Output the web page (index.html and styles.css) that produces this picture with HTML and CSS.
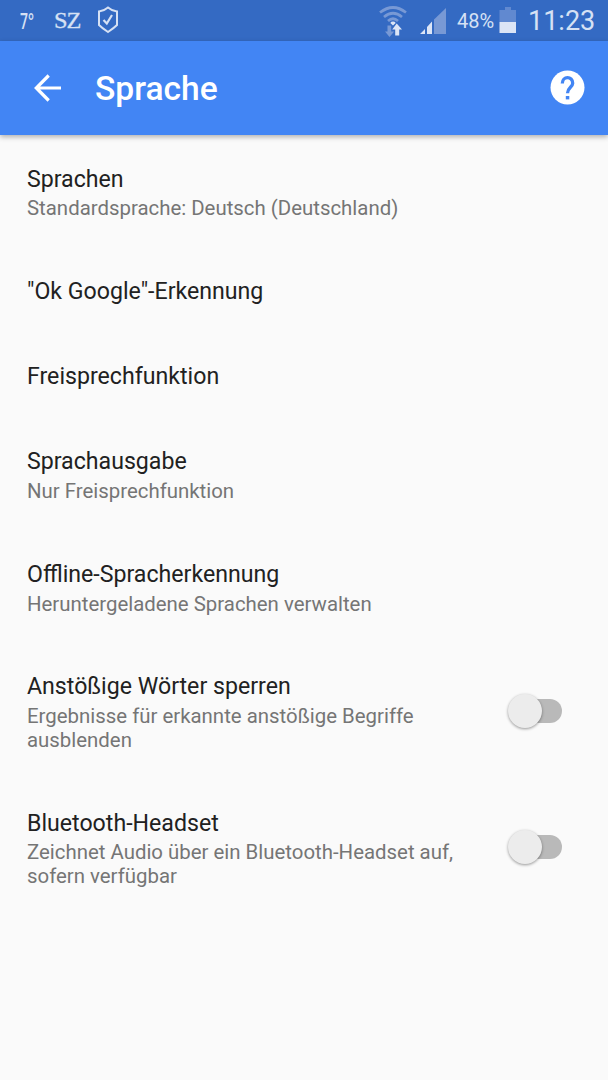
FILE: index.html
```html
<!DOCTYPE html>
<html lang="de">
<head>
<meta charset="utf-8">
<title>Sprache</title>
<link rel="stylesheet" href="styles.css">
</head>
<body>
<div class="status">
  <span class="temp"><span class="narrow">7°</span></span>
  <span class="sz"><span class="wide">SZ</span></span>
  <svg class="shield" width="22" height="28" viewBox="0 0 22 28" fill="none" stroke="#d6e1f4" stroke-width="2"><path d="M11 1.500Q15 5 20 5.500V19Q17 22 11 26Q5 22 2 19V5.500Q7 5 11 1.500Z"/><path d="M6.500 14L9.800 17.500L15 9" stroke-width="2.200"/></svg>
  <span class="spacer"></span>
  <svg class="wifi" width="30" height="34" viewBox="0 0 30 34" fill="none" stroke="#7899d5" stroke-width="2.700"><path d="M2 8.500Q15-1.500 28 8.500"/><path d="M6 13Q15 5.500 24 13"/><path d="M10 17Q15 12.500 20 17"/><path d="M12.300 19a3 2.500 0 0 1 5.400 0L15 21.500z" fill="#dce5f6" stroke="none"/><path d="M9.500 21.500h3.700v6h3L11.500 33L7 27.500h2.500z" fill="#7899d5" stroke="none"/><path d="M18.700 19.500L24 25.500H21.200v6H17.200V25.500H14.200z" fill="#dce5f6" stroke="none" /></svg>
  <svg class="signal" width="28" height="28" viewBox="0 0 28 28"><path d="M1 27L6 22V27ZM8 20L13 14.500V27H8Z" fill="#dce5f6"/><path d="M15 12.500L27 1V27H15Z" fill="#7899d5"/></svg>
  <span class="percent">48%</span>
  <svg class="battery" width="18" height="28" viewBox="0 0 18 28"><path d="M6 0h6v3h5v12H.5V3H6z" fill="#6189d0"/><path d="M.5 15H17V26H.5z" fill="#dce5f6"/></svg>
  <span class="clock">11:23</span>
</div>
<header class="bar">
  <svg class="back" width="28" height="28" viewBox="0 0 28 28" fill="none" stroke="#fff" stroke-width="3.200"><path d="M27 14H3M14.700 1.500L2.300 14L14.700 26.500"/></svg>
  <h1 class="heading">Sprache</h1>
  <svg class="help" width="35" height="35" viewBox="0 0 35 35"><circle cx="17.500" cy="17.500" r="17" fill="#fff"/><path d="M12.300 13.500C12.300 5.700 22.700 5.700 22.700 13.200C22.700 17.200 17.500 17.500 17.500 23.200" fill="none" stroke="#4285f4" stroke-width="3.300"/><path d="M15.800 26h3.500v3.400h-3.500z" fill="#4285f4"/></svg>
</header>
<main class="list">
  <div class="row"><div class="text"><div class="title">Sprachen</div><div class="summary">Standardsprache: Deutsch (Deutschland)</div></div></div>
  <div class="row"><div class="text"><div class="title">"Ok Google"-Erkennung</div></div></div>
  <div class="row"><div class="text"><div class="title">Freisprechfunktion</div></div></div>
  <div class="row"><div class="text"><div class="title">Sprachausgabe</div><div class="summary">Nur Freisprechfunktion</div></div></div>
  <div class="row"><div class="text"><div class="title">Offline-Spracherkennung</div><div class="summary">Heruntergeladene Sprachen verwalten</div></div></div>
  <div class="row"><div class="text"><div class="title">Anstößige Wörter sperren</div><div class="summary">Ergebnisse für erkannte anstößige Begriffe<br>ausblenden</div></div><div class="switch"><div class="thumb"></div></div></div>
  <div class="row"><div class="text"><div class="title">Bluetooth-Headset</div><div class="summary">Zeichnet Audio über ein Bluetooth-Headset auf,<br>sofern verfügbar</div></div><div class="switch"><div class="thumb"></div></div></div>
</main>
</body>
</html>
```
FILE: styles.css
```css
* { box-sizing: border-box; }
body { margin: 0; height: 1080px; background: #fafafa; font-family: Roboto, sans-serif; overflow: hidden; }
svg { display: block; flex: none; }
.status { height: 41px; display: flex; align-items: center; background: #346ac3; color: #d6e1f4; padding: 0 13px 0 20px; white-space: nowrap; }
.temp { width: 34px; font: 600 21px/38px "Open Sans", sans-serif; }
.narrow { display: inline-block; transform: scaleX(.66); transform-origin: left; }
.sz { width: 43px; font: 23px/38px "Liberation Serif", serif; letter-spacing: -1px; -webkit-text-stroke: .3px; }
.wide { display: inline-block; transform: scaleX(1.06); transform-origin: left; }
.shield { margin-bottom: 2px; }
.spacer { flex: 1; }
.wifi { margin-right: 11px; }
.signal { margin-right: 10px; }
.percent { width: 42px; font-size: 20px; }
.clock { width: 67px; margin-left: 11px; font-size: 27px; }
.bar { position: relative; height: 94px; display: flex; align-items: center; background: #4285f4; padding: 0 23px 1px 34px; box-shadow: 0 2px 5px rgba(0,0,0,.3); }
.heading { flex: 1; margin: 3px 0 0 33px; color: #fff; font-size: 33.600px; line-height: 40px; font-weight: 500; }
.list { padding-top: 2.200px; }
.row { display: flex; align-items: center; padding: 28.500px 46px 28.500px 27px; }
.text { flex: 1; }
.title { color: #212121; font-size: 23.150px; line-height: 28px; }
.summary { margin: 3.700px 0 .300px; color: #757575; font-size: 20.400px; line-height: 23.600px; white-space: nowrap; }
.switch { width: 54px; margin-bottom: 4px; display: flex; }
.switch::after { content: ""; width: 40px; height: 24px; margin: 5px 0 0 -20px; border-radius: 12px; background: #b9b9b9; }
.thumb { position: relative; z-index: 1; flex: none; width: 34px; height: 34px; border-radius: 50%; background: #ececec; box-shadow: 0 1px 3px rgba(0,0,0,.4); }
```
